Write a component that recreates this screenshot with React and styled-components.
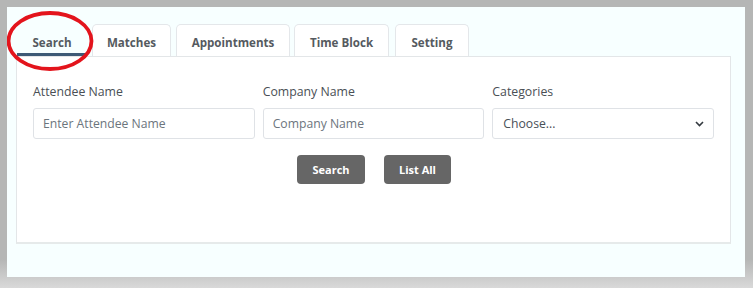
import styled, {createGlobalStyle} from "styled-components";

const GlobalStyle = createGlobalStyle`
  html, body {
    margin: 0;
    padding: 0;
    background: #b7b8b7;
  }
  body {
    font-family: "Open Sans", "Noto Sans", sans-serif;
  }
`;

const Frame = styled.div`
  width: 753px;
  height: 288px;
  box-sizing: border-box;
  padding: 7px 8px 11px 7px;
  background: linear-gradient(to bottom, #b5b6b5 0%, #b5b6b5 90%, #d9d9d9 100%);
`;

const Page = styled.div`
  position: relative;
  height: 100%;
  background: #f7ffff;
  padding: 17px 14px 0 9px;
  box-sizing: border-box;
`;

const TabList = styled.div`
  display: flex;
  border-bottom: 1px solid #e3e6e8;
`;

const Tab = styled.div`
  height: 32px;
  box-sizing: border-box;
  padding-top: 3px;
  display: flex;
  align-items: center;
  justify-content: center;
  width: ${p => p.$w}px;
  margin-right: ${p => p.$gap}px;
  font-size: 11.6px;
  font-weight: 700;
  color: #555a60;
  background: ${p => p.$active ? "transparent" : "#fff"};
  border: 1px solid ${p => p.$active ? "transparent" : "#e4e7ea"};
  border-bottom: none;
  border-radius: 5px 5px 0 0;
  margin-bottom: ${p => p.$active ? "-1px" : "0"};
  box-shadow: ${p => p.$active ? "inset 0 -3px 0 #3d5a76" : "none"};
`;

const Panel = styled.div`
  background: #fff;
  border: 1px solid #e3e6e8;
  border-top: none;
  border-bottom: 2px solid #e6eaea;
  height: 187px;
  box-sizing: border-box;
  padding: 27px 16px 0 16px;
`;

const Fields = styled.div`
  display: grid;
  grid-template-columns: 1fr 1fr 1fr;
  gap: 8px;
`;

const Field = styled.div`
  display: flex;
  flex-direction: column;
`;

const Label = styled.label`
  font-size: 12.3px;
  color: #4a4f55;
  margin-bottom: 8px;
  line-height: 16px;
`;

const Input = styled.input`
  height: 31px;
  box-sizing: border-box;
  border: 1px solid #dfe2e6;
  border-radius: 3px;
  padding: 0 9px;
  font-family: inherit;
  font-size: 12.2px;
  color: #495057;
  background: #fff;
  outline: none;
  &::placeholder {
    color: #6c757d;
  }
`;

const SelectBox = styled.div`
  height: 31px;
  box-sizing: border-box;
  border: 1px solid #dfe2e6;
  border-radius: 3px;
  padding: 0 9px 0 10px;
  display: flex;
  align-items: center;
  justify-content: space-between;
  font-size: 12.2px;
  color: #495057;
  background: #fff;
`;

const Buttons = styled.div`
  display: flex;
  justify-content: center;
  gap: 19px;
  margin-top: 16px;
  padding-left: 1px;
`;

const Button = styled.button`
  width: ${p => p.$w}px;
  height: 29px;
  border: none;
  border-radius: 4px;
  background: #666666;
  color: #fff;
  font-family: inherit;
  font-size: 11px;
  font-weight: 700;
  cursor: pointer;
`;

const Circle = styled.svg`
  position: absolute;
  left: 0;
  top: 4px;
  pointer-events: none;
`;

export default function App() {
    const tabs = [
        {name: 'Search', w: 72, gap: 4},
        {name: 'Matches', w: 79, gap: 5},
        {name: 'Appointments', w: 114, gap: 4},
        {name: 'Time Block', w: 95, gap: 6},
        {name: 'Setting', w: 74, gap: 0},
    ];
    return (
        <>
            <GlobalStyle/>
            <Frame>
                <Page>
                    <TabList>
                        {tabs.map(t => (
                            <Tab key={t.name} $w={t.w} $gap={t.gap} $active={t.name === 'Search'}>{t.name}</Tab>
                        ))}
                    </TabList>
                    <Panel>
                        <Fields>
                            <Field>
                                <Label>Attendee Name</Label>
                                <Input placeholder="Enter Attendee Name"/>
                            </Field>
                            <Field>
                                <Label>Company Name</Label>
                                <Input placeholder="Company Name"/>
                            </Field>
                            <Field>
                                <Label>Categories</Label>
                                <SelectBox>
                                    <span>Choose...</span>
                                    <svg width="9" height="6" viewBox="0 0 9 6">
                                        <path d="M1 1 L4.5 4.5 L8 1" fill="none" stroke="#343a40" strokeWidth="1.6"/>
                                    </svg>
                                </SelectBox>
                            </Field>
                        </Fields>
                        <Buttons>
                            <Button $w={68}>Search</Button>
                            <Button $w={67}>List All</Button>
                        </Buttons>
                    </Panel>
                    <Circle width="90" height="64" viewBox="0 0 90 64">
                        <ellipse cx="43" cy="30" rx="41.5" ry="28" fill="none" stroke="#e3141c" strokeWidth="3.8"/>
                    </Circle>
                </Page>
            </Frame>
        </>
    );
}
